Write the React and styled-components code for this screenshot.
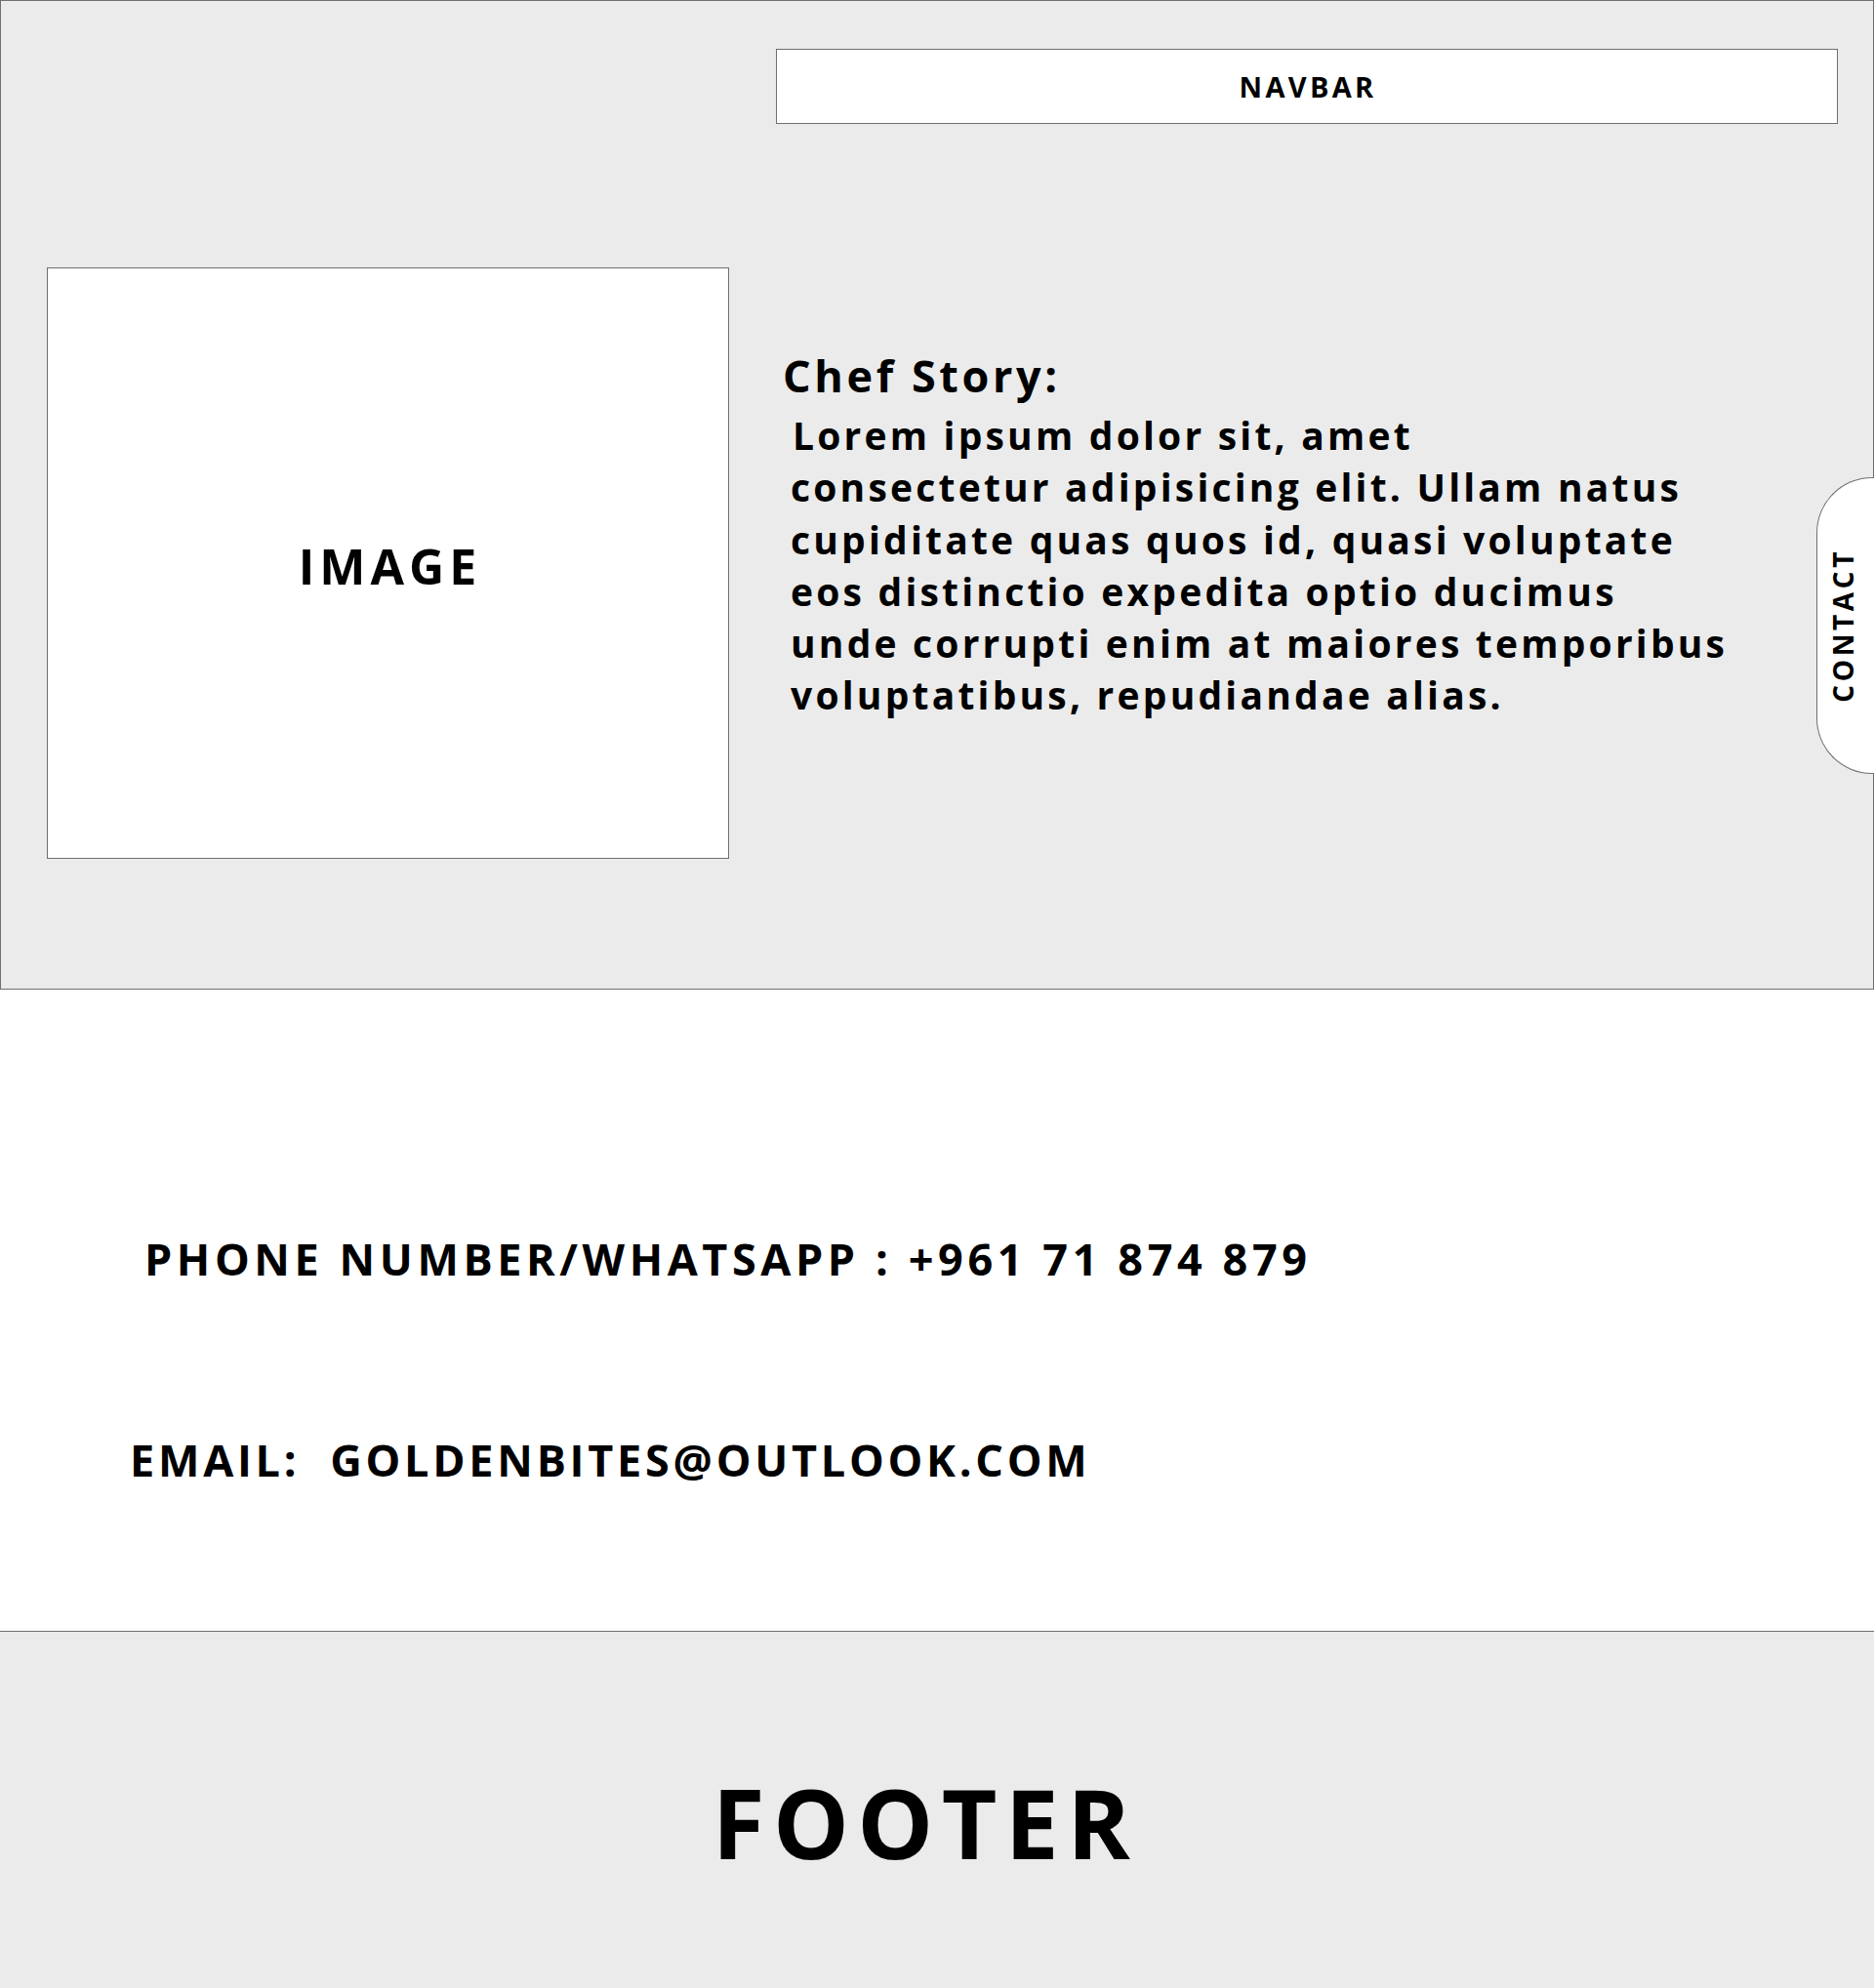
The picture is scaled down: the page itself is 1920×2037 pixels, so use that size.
import React from 'react'
import styled, { createGlobalStyle } from 'styled-components'

const GlobalStyle = createGlobalStyle`
  * { box-sizing: border-box; }
  body {
    margin: 0;
    background: #fff;
    font-family: "Open Sans", "Noto Sans", sans-serif;
    color: #000;
  }
`

const Page = styled.div`
  width: 1920px;
`

const Hero = styled.section`
  position: relative;
  height: 1014px;
  background: #ebebeb;
  border: 1px solid #6f6f6f;
  display: flex;
  flex-direction: column;
`

const NavRow = styled.div`
  display: flex;
  justify-content: flex-end;
  padding: 49px 36px 0 0;
`

const Navbar = styled.nav`
  width: 1088px;
  height: 77px;
  background: #fff;
  border: 1px solid #6f6f6f;
  display: flex;
  align-items: center;
  justify-content: center;
  font-size: 29px;
  font-weight: 700;
  letter-spacing: 3.3px;
  padding-left: 2px;
`

const StoryRow = styled.div`
  display: flex;
  align-items: flex-start;
  padding: 147px 0 0 47px;
  gap: 55px;
`

const ImageBox = styled.div`
  width: 699px;
  height: 606px;
  background: #fff;
  border: 1px solid #6f6f6f;
  display: flex;
  align-items: center;
  justify-content: center;
  font-size: 50px;
  font-weight: 700;
  letter-spacing: 5px;
  padding: 5px 0 0 4px;
`

const StoryText = styled.div`
  margin-top: 80px;
  width: 974px;
`

const StoryTitle = styled.h2`
  margin: 0;
  font-size: 45px;
  font-weight: 700;
  letter-spacing: 3.6px;
  line-height: normal;
`

const StoryBody = styled.p`
  margin: 4px 0 0 8px;
  width: 965px;
  font-size: 39px;
  font-weight: 700;
  letter-spacing: 3.2px;
  line-height: 53.3px;
  text-indent: 2px;
`

const ContactTab = styled.a`
  position: absolute;
  top: 488px;
  right: -1px;
  width: 59px;
  height: 304px;
  background: #fff;
  border: 1px solid #6f6f6f;
  border-right: none;
  border-radius: 57px 0 0 57px;
  display: flex;
  align-items: center;
  justify-content: center;
  color: #000;
  text-decoration: none;
`

const TabLabel = styled.span`
  writing-mode: vertical-rl;
  transform: rotate(180deg);
  font-size: 28px;
  font-weight: 700;
  letter-spacing: 3.6px;
  margin-right: 6px;
`

const Contacts = styled.section`
  height: 657px;
  background: #fff;
  display: flex;
  flex-direction: column;
  gap: 145px;
  padding-top: 245px;
`

const ContactLine = styled.div`
  font-size: 45px;
  font-weight: 700;
  letter-spacing: ${p => p.$spacing}px;
  padding-left: ${p => p.$indent}px;
  line-height: normal;
  white-space: pre;
`

const Footer = styled.footer`
  height: 366px;
  background: #ebebeb;
  border-top: 1px solid #6f6f6f;
  padding: 128px 24px 0 0;
  text-align: center;
  font-size: 98px;
  font-weight: 700;
  letter-spacing: 8.4px;
  line-height: normal;
`

export default function App() {
  return (
    <Page>
      <GlobalStyle />
      <Hero>
        <NavRow>
          <Navbar>NAVBAR</Navbar>
        </NavRow>
        <StoryRow>
          <ImageBox>IMAGE</ImageBox>
          <StoryText>
            <StoryTitle>Chef Story:</StoryTitle>
            <StoryBody>
              Lorem ipsum dolor sit, amet
              <br />
              consectetur adipisicing elit. Ullam natus cupiditate quas quos id, quasi voluptate eos
              distinctio expedita optio ducimus unde corrupti enim at maiores temporibus
              voluptatibus, repudiandae alias.
            </StoryBody>
          </StoryText>
        </StoryRow>
        <ContactTab href="#contact">
          <TabLabel>CONTACT</TabLabel>
        </ContactTab>
      </Hero>
      <Contacts id="contact">
        <ContactLine $indent={148} $spacing={4.6}>PHONE NUMBER/WHATSAPP : +961 71 874 879</ContactLine>
        <ContactLine $indent={133} $spacing={3.75}>{'EMAIL:  GOLDENBITES@OUTLOOK.COM'}</ContactLine>
      </Contacts>
      <Footer>FOOTER</Footer>
    </Page>
  )
}
